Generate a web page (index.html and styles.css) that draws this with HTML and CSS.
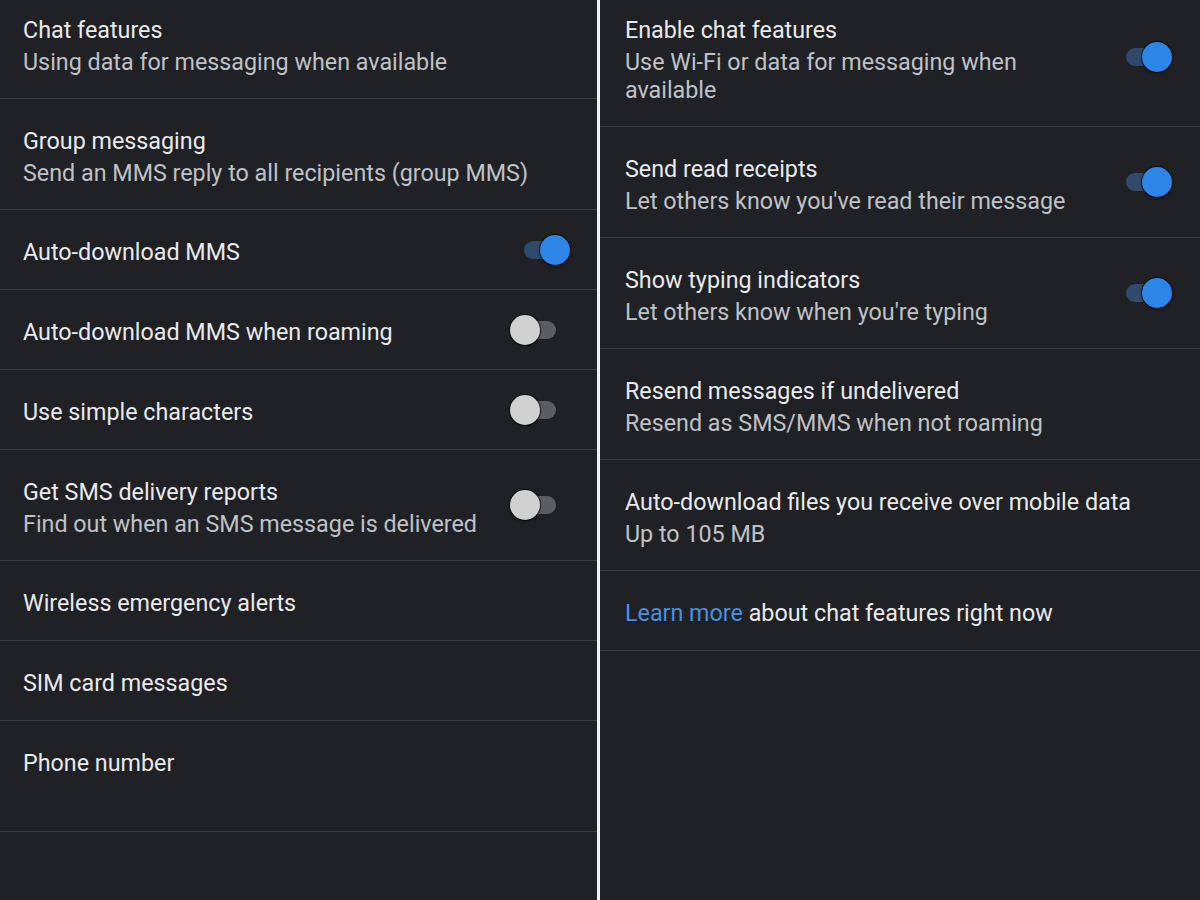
FILE: index.html
```html
<!DOCTYPE html>
<html lang="en">
<head>
  <meta charset="UTF-8" />
  <meta name="viewport" content="width=device-width, initial-scale=1" />
  <title>Messages settings</title>
  <link rel="stylesheet" href="styles.css">
</head>
<body>
  <main class="screens">
    <!-- Advanced settings -->
    <section class="panel panel-left">
      <div class="list">
        <div class="row">
          <div class="row-text">
            <div class="row-title">Chat features</div>
            <div class="row-sub">Using data for messaging when available</div>
          </div>
        </div>
        <div class="row">
          <div class="row-text">
            <div class="row-title">Group messaging</div>
            <div class="row-sub">Send an MMS reply to all recipients (group MMS)</div>
          </div>
        </div>
        <div class="row">
          <div class="row-text">
            <div class="row-title">Auto-download MMS</div>
          </div>
          <span class="toggle on"></span>
        </div>
        <div class="row">
          <div class="row-text">
            <div class="row-title">Auto-download MMS when roaming</div>
          </div>
          <span class="toggle"></span>
        </div>
        <div class="row">
          <div class="row-text">
            <div class="row-title">Use simple characters</div>
          </div>
          <span class="toggle"></span>
        </div>
        <div class="row">
          <div class="row-text">
            <div class="row-title">Get SMS delivery reports</div>
            <div class="row-sub">Find out when an SMS message is delivered</div>
          </div>
          <span class="toggle"></span>
        </div>
        <div class="row">
          <div class="row-text">
            <div class="row-title">Wireless emergency alerts</div>
          </div>
        </div>
        <div class="row">
          <div class="row-text">
            <div class="row-title">SIM card messages</div>
          </div>
        </div>
        <div class="row">
          <div class="row-text">
            <div class="row-title">Phone number</div>
            <div class="row-sub">&nbsp;</div>
          </div>
        </div>
        <div class="row"></div>
      </div>
    </section>

    <div class="split"></div>

    <!-- Chat features -->
    <section class="panel panel-right">
      <div class="list">
        <div class="row">
          <div class="row-text">
            <div class="row-title">Enable chat features</div>
            <div class="row-sub">Use Wi-Fi or data for messaging when available</div>
          </div>
          <span class="toggle on"></span>
        </div>
        <div class="row">
          <div class="row-text">
            <div class="row-title">Send read receipts</div>
            <div class="row-sub">Let others know you've read their message</div>
          </div>
          <span class="toggle on"></span>
        </div>
        <div class="row">
          <div class="row-text">
            <div class="row-title">Show typing indicators</div>
            <div class="row-sub">Let others know when you're typing</div>
          </div>
          <span class="toggle on"></span>
        </div>
        <div class="row">
          <div class="row-text">
            <div class="row-title">Resend messages if undelivered</div>
            <div class="row-sub">Resend as SMS/MMS when not roaming</div>
          </div>
        </div>
        <div class="row">
          <div class="row-text">
            <div class="row-title">Auto-download files you receive over mobile data</div>
            <div class="row-sub">Up to 105 MB</div>
          </div>
        </div>
        <div class="row">
          <div class="row-text">
            <div class="row-title"><a class="link" href="#">Learn more</a> about chat features right now</div>
          </div>
        </div>
      </div>
    </section>
  </main>
</body>
</html>
```

FILE: styles.css
```css
/* Dark settings screens, side by side */
html, body {
  margin: 0;
  height: 100%;
}

body {
  background: #202124;
  font-family: Roboto, 'Noto Sans', Arial, sans-serif;
  color: #e8eaed;
  overflow: hidden;
}

.screens {
  display: grid;
  grid-template-columns: 597px 3px 1fr;
  height: 900px;
}

.panel {
  background: #202124;
  overflow: hidden;
}

.split {
  background: #f1f1f1;
}

/* first row is cut off by the screenshot edge */
.list {
  margin-top: -12px;
}

.row {
  display: flex;
  align-items: center;
  gap: 32px;
  min-height: 30px;
  padding: 27px 27px 22px 23px;
  border-bottom: 1px solid #3a3b3f;
}

.panel-right .row {
  padding-left: 25px;
  padding-right: 28px;
}

.row-text {
  flex: 1;
  min-width: 0;
}

.row-title {
  font-size: 23.3px;
  line-height: 30px;
  color: #e8eaed;
}

.row-sub {
  margin-top: 3px;
  font-size: 23.3px;
  line-height: 28px;
  color: #bfc2c7;
}

.link {
  color: #4b8fe2;
  text-decoration: none;
}

/* Switches */
.toggle {
  position: relative;
  flex-shrink: 0;
  width: 50px;
  height: 30px;
  margin-top: -5px;
}

.toggle::before {
  content: "";
  position: absolute;
  left: 4px;
  right: 4px;
  top: 6px;
  height: 18px;
  border-radius: 9px;
  background: #5b5d61;
}

.toggle::after {
  content: "";
  position: absolute;
  top: 0;
  left: 0;
  width: 30px;
  height: 30px;
  border-radius: 50%;
  background: #d0d0d0;
  box-shadow: 0 0 0 1px rgba(0,0,0,0.55), 0 1px 3px rgba(0,0,0,0.5);
}

.toggle:not(.on) {
  margin-right: 10px;
}

.toggle.on::before {
  background: #2f4a6b;
}

.toggle.on::after {
  left: auto;
  right: 0;
  background: #2c86e8;
}
```
